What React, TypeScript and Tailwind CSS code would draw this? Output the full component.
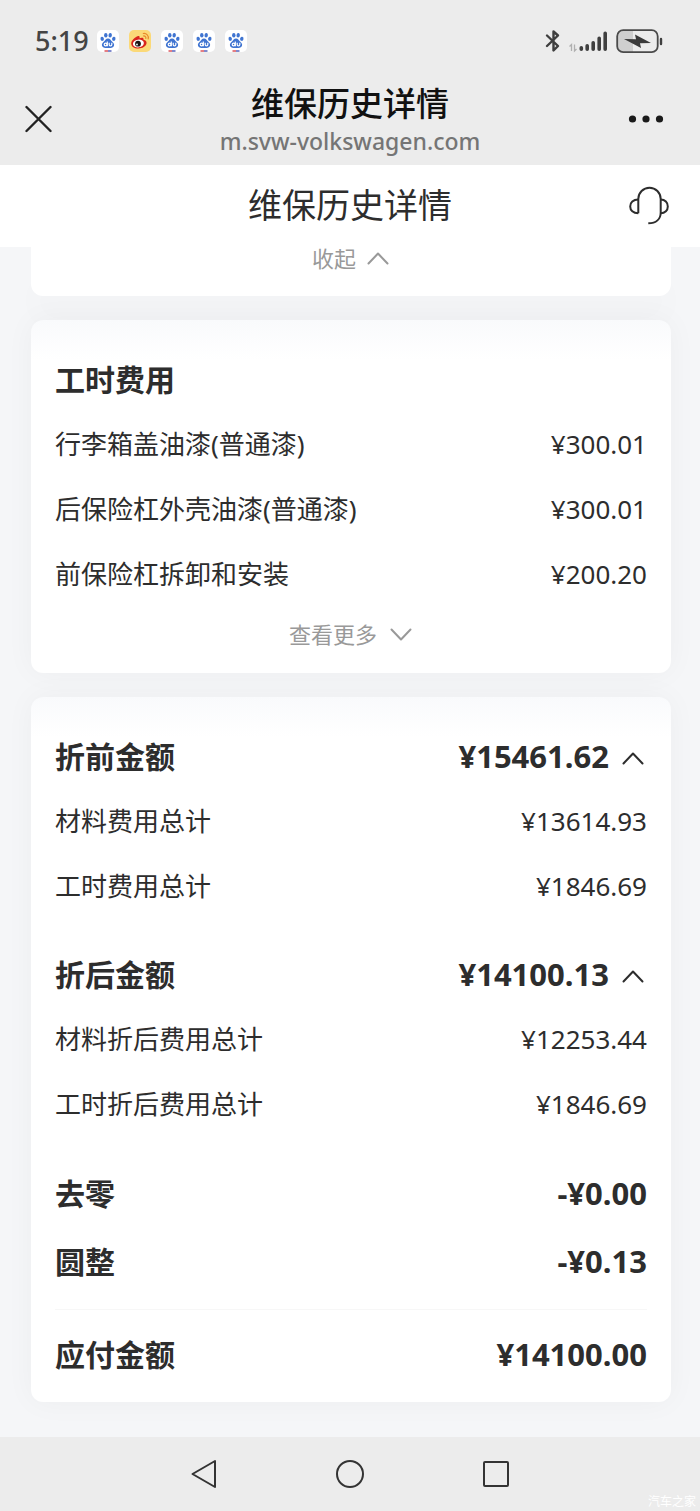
import { useState } from 'react';

type Row = { label: string; value: string };

const laborRows: Row[] = [
  { label: '行李箱盖油漆(普通漆)', value: '¥300.01' },
  { label: '后保险杠外壳油漆(普通漆)', value: '¥300.01' },
  { label: '前保险杠拆卸和安装', value: '¥200.20' },
];

const beforeRows: Row[] = [
  { label: '材料费用总计', value: '¥13614.93' },
  { label: '工时费用总计', value: '¥1846.69' },
];

const afterRows: Row[] = [
  { label: '材料折后费用总计', value: '¥12253.44' },
  { label: '工时折后费用总计', value: '¥1846.69' },
];

function BaiduIcon() {
  return (
    <svg width="22" height="22" viewBox="0 0 22 22" aria-hidden="true">
      <rect width="22" height="22" rx="5" fill="#fff" />
      <g fill="#3f74d1">
        <ellipse cx="5.2" cy="8.8" rx="1.7" ry="2.1" transform="rotate(-12 5.2 8.8)" />
        <ellipse cx="8.8" cy="5.2" rx="1.7" ry="2.3" />
        <ellipse cx="13.2" cy="5.2" rx="1.7" ry="2.3" transform="rotate(8 13.2 5.2)" />
        <ellipse cx="16.8" cy="8.8" rx="1.7" ry="2.1" transform="rotate(12 16.8 8.8)" />
        <path d="M11 8.4c2.2 0 2.6 1.9 4 3.1 1.5 1.2 2.5 2.5 2 4.2-.5 1.9-2.5 2.4-6 2.3-3.5.1-5.5-.4-6-2.3-.5-1.7.5-3 2-4.2 1.4-1.2 1.8-3.1 4-3.1z" />
      </g>
      <g fill="none" stroke="#fff" strokeWidth="1.2">
        <circle cx="8.6" cy="14.5" r="1.4" />
        <path d="M10.3 11.5v4.7M12.2 12.8v2c0 1.5 2.6 1.5 2.6 0v-2" />
      </g>
      <path d="M7.5 21H11" stroke="#d8474e" strokeWidth="1.4" />
      <path d="M11 21h3.5" stroke="#4a58b8" strokeWidth="1.4" />
    </svg>
  );
}

function WeiboIcon() {
  return (
    <svg width="22" height="22" viewBox="0 0 22 22" aria-hidden="true">
      <rect width="22" height="22" rx="5" fill="#fbd978" />
      <path
        d="M8.5 6.2c1.8-.8 2.5.1 2 2 2.4-1 4.6-.7 4 1.6 2.3.6 3.4 1.8 3 3.7-.6 3-4 4.900-8 4.900-4.300 0-7.300-2-7.300-5 0-2.700 3.500-6.200 6.300-7.200z"
        fill="#d9251d"
      />
      <ellipse cx="9.4" cy="13.5" rx="5.5" ry="3.9" fill="#fff" transform="rotate(-8 9.4 13.5)" />
      <circle cx="9" cy="13.7" r="2.9" fill="#1b1414" />
      <circle cx="8" cy="14.5" r="0.9" fill="#fff" />
      <path d="M14.3 3.5c3.2-.5 5.7 2.2 4.9 5.4M14.5 6c1.6-.2 2.7 1 2.3 2.5" fill="none" stroke="#e88a2c" strokeWidth="1.2" strokeLinecap="round" />
    </svg>
  );
}

function BluetoothIcon() {
  return (
    <svg width="16" height="24" viewBox="0 0 16 24" fill="none" stroke="#3f3f3f" strokeWidth="2.4" strokeLinejoin="round" strokeLinecap="round" aria-hidden="true">
      <path d="M3 6.5L14 17L9.5 21.5V2.5L14 6.500L3 17" />
    </svg>
  );
}

function SignalIcon() {
  return (
    <svg width="40" height="24" viewBox="0 0 40 24" aria-hidden="true">
      <path d="M3.5 22v-6.5l-2 2M6.5 15.5V22l2-2" fill="none" stroke="#b0b0b0" strokeWidth="1.3" />
      <g stroke="#3f3f3f" strokeWidth="3.6" strokeLinecap="round">
        <path d="M13.3 18.800v1.400M19.2 16.800v3.400M25.2 13.800v6.400M31.2 9.300v10.900M37.2 4.300v15.900" />
      </g>
    </svg>
  );
}

function BatteryIcon() {
  return (
    <svg width="47" height="26" viewBox="0 0 47 26" aria-hidden="true">
      <rect x="1.2" y="2.2" width="40.5" height="22" rx="6" fill="#ececec" />
      <path d="M7.2 2.2H17v22H7.2a6 6 0 0 1-6-6v-10a6 6 0 0 1 6-6z" fill="#cfcfcf" />
      <rect x="1.2" y="2.2" width="40.5" height="22" rx="6" fill="none" stroke="#4a4a4a" strokeWidth="1.8" />
      <path d="M8 11L20 11.3L19 6.5L35 15L24 15.2L25 20z" fill="#3a3a3a" />
      <path d="M45 11v5" stroke="#3f3f3f" strokeWidth="2.4" strokeLinecap="round" />
    </svg>
  );
}

function HeadsetIcon() {
  return (
    <svg width="40" height="40" viewBox="0 0 40 40" fill="none" stroke="#2d2d2d" strokeWidth="2" strokeLinejoin="round" aria-hidden="true">
      <path d="M9.3 28.3V14a11.200 11.200 0 0 1 22.400 0v13.500c0 6.500-4.500 10.800-12.400 10.800" />
      <path d="M9.3 14.500c-5.200 0-8.100 3.200-8.100 6.900s2.900 6.900 8.100 6.900" />
      <path d="M31.7 14.500c4.400 0 7.100 3.200 7.100 6.900s-2.700 6.900-7.100 6.900" />
    </svg>
  );
}

function Chevron({ up }: { up?: boolean }) {
  return (
    <svg width="24" height="14" viewBox="0 0 24 14" fill="none" stroke="currentColor" strokeWidth="2" strokeLinecap="round" strokeLinejoin="round" aria-hidden="true">
      <path d={up ? 'M2.5 12.5L12 2.5L21.5 12.5' : 'M2.5 2.5L12 12.5L21.5 2.5'} />
    </svg>
  );
}

function Rows({ rows }: { rows: Row[] }) {
  return (
    <dl className="text-[26px]">
      {rows.map((row) => (
        <div key={row.label} className="flex h-[65px] items-center justify-between">
          <dt>{row.label}</dt>
          <dd>{row.value}</dd>
        </div>
      ))}
    </dl>
  );
}

function AmountGroup({ title, total, rows }: { title: string; total: string; rows: Row[] }) {
  const [open, setOpen] = useState(true);

  return (
    <section>
      <div className="flex h-[66px] items-center justify-between font-bold">
        <h2 className="text-[30px]">{title}</h2>
        <button type="button" aria-expanded={open} onClick={() => setOpen(!open)} className="flex items-center gap-3 pr-[2px] text-[31px]">
          {total}
          <span className="pt-1">
            <Chevron up={open} />
          </span>
        </button>
      </div>
      {open && <Rows rows={rows} />}
    </section>
  );
}

function TotalRow({ label, value }: Row) {
  return (
    <div className="flex h-[68px] items-center justify-between font-bold">
      <dt className="text-[30px]">{label}</dt>
      <dd className="text-[31px]">{value}</dd>
    </div>
  );
}

export default function App() {
  return (
    <div className="flex min-h-screen flex-col bg-[#f5f6f8] font-['Noto_Sans','Noto_Sans_CJK_SC',sans-serif] text-[#2d2d2d]">
      <header className="bg-[#ececec] pb-[9px]">
        <div className="flex h-[82px] items-center justify-between pr-[37px] pl-[35px]">
          <div className="flex items-center gap-2">
            <span className="text-[27px] font-medium text-[#444]">5:19</span>
            <div className="flex items-center gap-[10px]">
              <BaiduIcon />
              <WeiboIcon />
              <BaiduIcon />
              <BaiduIcon />
              <BaiduIcon />
            </div>
          </div>
          <div className="flex items-center gap-2">
            <BluetoothIcon />
            <SignalIcon />
            <BatteryIcon />
          </div>
        </div>
        <div className="flex items-center justify-between px-6">
          <button type="button" aria-label="关闭" className="flex w-12">
            <svg width="28" height="28" viewBox="0 0 28 28" stroke="#222" strokeWidth="2.4" strokeLinecap="round">
              <path d="M2.500 2L26.500 26M26.500 2L2.500 26" />
            </svg>
          </button>
          <div className="text-center">
            <h1 className="text-[33px] leading-[44px] font-medium text-[#111]">维保历史详情</h1>
            <p className="text-[23px] leading-[30px] font-medium text-[#757575]">m.svw-volkswagen.com</p>
          </div>
          <button type="button" aria-label="更多" className="flex w-12 justify-end pr-3">
            <svg width="36" height="10" viewBox="0 0 36 10" fill="#1a1a1a">
              <circle cx="4.5" cy="5" r="3.6" />
              <circle cx="18" cy="5" r="3.6" />
              <circle cx="31.5" cy="5" r="3.6" />
            </svg>
          </button>
        </div>
      </header>

      <div className="flex h-[82px] items-center justify-between bg-white px-[31px] pb-[2px]">
        <span className="w-10" />
        <h2 className="text-[34px]">维保历史详情</h2>
        <button type="button" aria-label="在线客服">
          <HeadsetIcon />
        </button>
      </div>

      <main className="flex flex-1 flex-col gap-6 pr-[29px] pb-[34px] pl-[31px]">
        <section className="rounded-b-xl bg-white pb-[27px] shadow-[0_30px_30px_rgba(0,0,0,0.01)]">
          <button type="button" className="mx-auto flex items-center gap-[10px] text-[22px] leading-[22px] text-[#999]">
            收起
            <Chevron up />
          </button>
        </section>

        <section className="rounded-xl bg-white bg-linear-to-b from-[#f9fafc] to-white to-[40px] px-6 pt-[26px] pb-3 shadow-[0_0_30px_rgba(0,0,0,0.04)]">
          <h2 className="flex h-[66px] items-center text-[30px] font-bold">工时费用</h2>
          <Rows rows={laborRows} />
          <button type="button" className="mx-auto flex h-[54px] items-center gap-[12px] text-[22px] text-[#999]">
            查看更多
            <Chevron />
          </button>
        </section>

        <section className="rounded-xl bg-white bg-linear-to-b from-[#f9fafc] to-white to-[40px] px-6 pt-[26px] pb-[14px] shadow-[0_0_30px_rgba(0,0,0,0.04)]">
          <div className="flex flex-col gap-[22px]">
            <AmountGroup title="折前金额" total="¥15461.62" rows={beforeRows} />
            <AmountGroup title="折后金额" total="¥14100.13" rows={afterRows} />
            <dl>
              <TotalRow label="去零" value="-¥0.00" />
              <TotalRow label="圆整" value="-¥0.13" />
            </dl>
          </div>
          <dl className="mt-[14px] border-t border-[#f7f7f7] pt-[10px]">
            <TotalRow label="应付金额" value="¥14100.00" />
          </dl>
        </section>
      </main>

      <nav className="relative flex h-[74px] items-center justify-center gap-[118px] bg-[#ececec]">
        <button type="button" aria-label="返回">
          <svg width="28" height="32" viewBox="0 0 28 32" fill="none" stroke="#333" strokeWidth="2" strokeLinejoin="round">
            <path d="M25 3v26L2.500 16z" />
          </svg>
        </button>
        <button type="button" aria-label="主页">
          <svg width="28" height="32" viewBox="0 0 28 32" fill="none" stroke="#333" strokeWidth="2">
            <circle cx="14" cy="16" r="13" />
          </svg>
        </button>
        <button type="button" aria-label="最近任务">
          <svg width="28" height="32" viewBox="0 0 28 32" fill="none" stroke="#333" strokeWidth="2" strokeLinejoin="round">
            <rect x="2" y="4" width="24" height="24" rx="1" />
          </svg>
        </button>
        <span className="absolute right-1 bottom-0 text-[12px] text-white">汽车之家</span>
      </nav>
    </div>
  );
}
